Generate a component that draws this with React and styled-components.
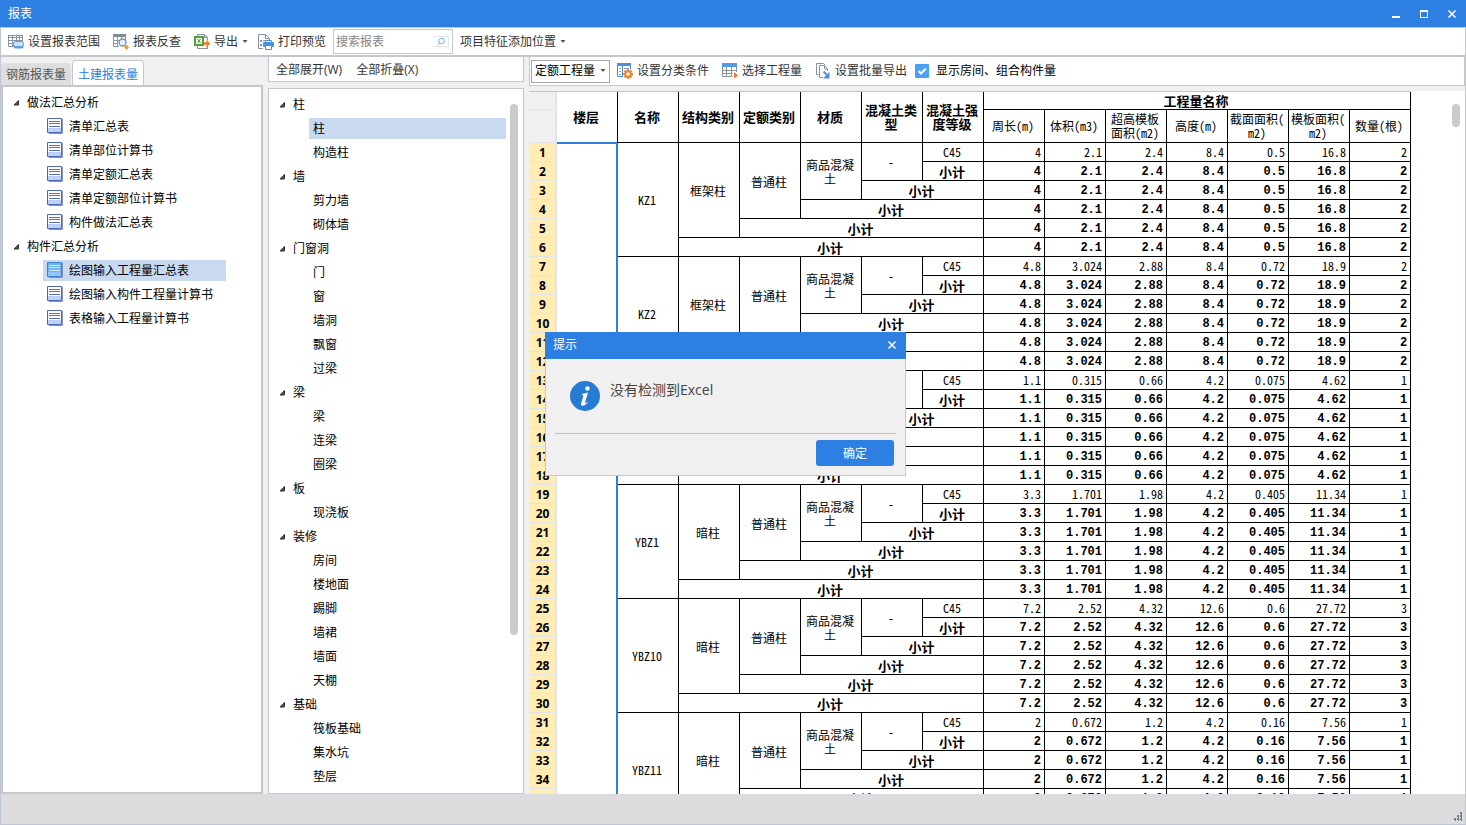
import React, { useState } from "react";
import styled, { createGlobalStyle } from "styled-components";

//-----------Styling--------------//

const GlobalStyle = createGlobalStyle`
  * {
    box-sizing: border-box;
  }

  body {
    margin: 0;
    font-family: "Open Sans", "Noto Sans CJK SC", sans-serif;
    font-size: 12px;
    line-height: 16px;
    color: #000;
  }

  button, input, select {
    font: inherit;
    color: inherit;
  }
`;

const Window = styled.div`
  display: flex;
  flex-direction: column;
  height: 100vh;
  background: #f0f0f0;
`;

const TitleBar = styled.header`
  display: flex;
  align-items: center;
  justify-content: space-between;
  flex: none;
  height: 27px;
  padding: 0 8px;
  background: #2d80e2;
  color: #fff;
`;

const Title = styled.h1`
  margin: 0;
  font-size: 12px;
  font-weight: 400;
`;

const WindowButtons = styled.div`
  display: flex;
  gap: 16px;
`;

const IconButton = styled.button`
  display: flex;
  padding: 0;
  border: 0;
  background: none;
`;

const Frame = styled.div`
  display: flex;
  flex-direction: column;
  flex: 1;
  min-height: 0;
  border: solid #bfc7d6;
  border-width: 0 1px 1px;
`;

const Toolbar = styled.div`
  display: flex;
  align-items: center;
  gap: 1px;
  flex: none;
  height: 30px;
  padding: 0 1px;
  background: #fff;
  border-top: 1px solid #c4c8cd;
  border-bottom: 2px solid #c4c8cd;
`;

const ToolButton = styled.button`
  display: flex;
  align-items: center;
  gap: 4px;
  height: 22px;
  padding: 0 ${(props) => (props.$menu ? "3px" : "6px")} 0 6px;
  border: 0;
  border-radius: 3px;
  background: #fff;
  color: #333;
  white-space: nowrap;
`;

const SearchBox = styled.label`
  display: flex;
  align-items: center;
  width: 120px;
  height: 25px;
  padding: 0 3px 0 2px;
  border: 1px solid #c4c8cd;

  input {
    flex: 1;
    min-width: 0;
    padding: 0;
    border: 0;
    outline: 0;
    background: none;
  }

  input::placeholder {
    color: #858585;
    opacity: 1;
  }
`;

const Main = styled.main`
  display: grid;
  grid-template-columns: 262px 256px minmax(0, 1fr);
  gap: 5px;
  flex: 1;
  min-height: 0;
`;

const Column = styled.section`
  display: flex;
  flex-direction: column;
  min-width: 0;
  min-height: 0;
`;

const Tabs = styled.div`
  display: flex;
  align-items: flex-end;
  gap: 1px;
  flex: none;
  height: 28px;
`;

const Tab = styled.button`
  height: ${(props) => (props.$active ? "26px" : "22px")};
  margin-bottom: ${(props) => (props.$active ? "-1px" : "0")};
  padding: 2px 5px 0;
  border: ${(props) => (props.$active ? "1px solid #c4c8cd" : "0")};
  border-bottom: 0;
  border-radius: 4px 4px 0 0;
  background: ${(props) => (props.$active ? "#fff" : "#dedede")};
  color: ${(props) => (props.$active ? "#2d80e2" : "#555")};
`;

const Panel = styled.div`
  display: flex;
  flex: 1;
  min-height: 0;
  overflow: hidden;
  padding-top: 3px;
  background: #fff;
  border: ${(props) => (props.$thick ? "2px" : "1px")} solid #c4c8cd;
`;

const PanelToolbar = styled.div`
  display: flex;
  align-items: center;
  gap: ${(props) => (props.$tall ? "1px" : "2px")};
  flex: none;
  height: ${(props) => (props.$tall ? "29px" : "25px")};
  margin-bottom: ${(props) => (props.$tall ? "5px" : "6px")};
  padding: ${(props) => (props.$tall ? "0 1px" : "2px 1px 0")};
  background: #fff;
  border: 1px solid #c4c8cd;
  border-top: 0;
`;

const Tree = styled.ul`
  flex: 1;
  margin: 0;
  padding: 0;
  list-style: none;

  ul {
    margin: 0;
    padding: 0;
    list-style: none;
  }
`;

const TreeGroup = styled.button`
  display: flex;
  align-items: center;
  gap: 7px;
  height: 24px;
  padding: 2px 9px 0;
  border: 0;
  background: none;
`;

const TreeItem = styled.li`
  display: flex;
  align-items: center;
  height: 24px;
  padding-left: 40px;
  padding-right: ${(props) => (props.$wide ? "4px" : "35px")};
`;

const TreeButton = styled.button`
  display: flex;
  align-items: center;
  gap: 6px;
  flex: 1;
  height: 21px;
  padding: 0 4px;
  border: 0;
  background: ${(props) => (props.$selected ? "#c9d9f0" : "none")};
  white-space: nowrap;

  span {
    padding-top: 2px;
  }
`;

const ScrollTrack = styled.div`
  display: flex;
  flex: none;
  width: 8px;
  margin: ${(props) => (props.$table ? "13px 5px 0 0" : "12px 5px 0 0")};
`;

const ScrollThumb = styled.div`
  width: 8px;
  height: ${(props) => props.$length};
  border-radius: 4px;
  background: #cbcbcb;
`;

const SelectBox = styled.label`
  display: flex;
  align-items: center;
  width: 79px;
  height: 23px;
  padding: 0 3px;
  border: 1px solid #a5a5a5;

  select {
    flex: 1;
    min-width: 0;
    padding: 0;
    border: 0;
    outline: 0;
    appearance: none;
    background: none;
  }
`;

const CheckLabel = styled.label`
  display: flex;
  align-items: center;
  gap: 7px;
  padding-left: 1px;
  white-space: nowrap;

  input {
    position: absolute;
    opacity: 0;
  }
`;

const Sheet = styled.div`
  display: flex;
  align-items: flex-start;
  justify-content: space-between;
  flex: 1;
  min-height: 0;
  overflow: hidden;
  background: #fff;
`;

const Table = styled.table`
  flex: none;
  table-layout: fixed;
  width: 882px;
  border-spacing: 0;
  border-top: 1px solid #c4c4c4;
  font-family: "Noto Sans Mono CJK SC", "Noto Sans CJK SC", monospace;
  font-size: 12px;
  line-height: 14px;
`;

const Cell = styled.td`
  height: 19px;
  padding: 0 2px 0 0;
  overflow: hidden;
  border: solid #000;
  border-width: 0 1px 1px 0;
  text-align: center;
  font-weight: ${(props) => (props.$bold ? "700" : "400")};
  font-size: ${(props) => (props.$bold ? "13px" : "12px")};
  line-break: anywhere;
`;

const TextCell = styled(Cell)`
  padding-top: 2px;
`;

const NumberCell = styled(Cell)`
  padding: ${(props) => (props.$bold ? "2px" : "0")} 3px 0 0;
  text-align: right;
  font-size: 12px;
  font-family: ${(props) =>
    props.$bold
      ? '"Liberation Mono", monospace'
      : '"Noto Sans Mono CJK SC", "Liberation Mono", monospace'};
`;

const HeadCell = styled(Cell)`
  height: ${(props) => (props.$top ? "18px" : "33px")};
  border-bottom-color: ${(props) => (props.$blue ? "#2d80e2" : "#000")};
`;

const FloorCell = styled.td`
  border-top: 1px solid #2d80e2;
  border-right: 2px solid #2d80e2;
`;

const RowHead = styled.th`
  height: ${(props) => props.$height || "19px"};
  padding: 1px 0 0 1px;
  border: solid #e3e4e8;
  border-width: 0 2px 1px 0;
  background: ${(props) => (props.$corner ? "#f0f0f0" : "#ffedb3")};
  font-family: "Open Sans", sans-serif;
  font-size: 12px;
  font-weight: 700;
`;

const StatusBar = styled.footer`
  display: flex;
  align-items: flex-end;
  justify-content: flex-end;
  flex: none;
  height: 30px;
  padding: 2px 2px;
  background: #dcdcde;
`;

const Dialog = styled.div`
  position: fixed;
  top: calc(50% - 81px);
  left: calc(50% - 188px);
  z-index: 10;
  width: 361px;
  background: #f0f0f0;
  border: 1px solid #bfc7d6;
  border-top: 0;
`;

const DialogHeader = styled.header`
  display: flex;
  align-items: center;
  justify-content: space-between;
  height: 27px;
  margin: 0 -1px;
  padding: 0 8px;
  background: #2d80e2;
  color: #fff;
`;

const DialogContent = styled.div`
  display: flex;
  gap: 10px;
  height: 75px;
  margin: 0 9px;
  padding: 22px 15px 0;
  border-bottom: 1px solid #c0c3c6;
  color: #444;
  font-size: 14px;

  p {
    margin: 0;
    line-height: 18px;
  }
`;

const DialogFooter = styled.footer`
  display: flex;
  justify-content: flex-end;
  padding: 6px 11px 9px;
`;

const ConfirmButton = styled.button`
  width: 78px;
  height: 26px;
  padding: 2px 0 0;
  border: 0;
  border-radius: 3px;
  background: #2d80e2;
  color: #fff;
`;

//-----------Icons--------------//

const Svg = ({ size = 16, children }) => (
  <svg width={size} height={size} viewBox={`0 0 ${size} ${size}`} fill="none" aria-hidden="true">
    {children}
  </svg>
);

const Caret = () => (
  <svg width="6" height="4" viewBox="0 0 6 4" aria-hidden="true">
    <path d="M.5 0h5L3 3z" fill="#555" />
  </svg>
);

const CloseIcon = () => (
  <Svg size={12}>
    <path d="M2.5 2.5l7 7M9.5 2.5l-7 7" stroke="#fff" strokeWidth="1.5" />
  </Svg>
);

const RangeIcon = () => (
  <Svg>
    <path d="M0 1h15v3H0z" fill="#8594a0" />
    <path d="M.5 3v9.5H6M.5 6.5h14M.5 9.5h5M4.5 2v10M8.5 2v5M11.5 2v5M14.5 2v6" stroke="#8594a0" />
    <path d="M1 2.500h3M5 2.500h3M9 2.500h2M12 2.500h2" stroke="#fff" />
    <rect x="5.500" y="8.500" width="10" height="6" rx="2" fill="#5b9ee2" />
    <rect x="5.500" y="7.500" width="10" height="5" rx="2" fill="#c8e2fb" stroke="#5b9ee2" />
  </Svg>
);

const CheckReportIcon = () => (
  <Svg>
    <path d="M0 0h13v3H0z" fill="#7e8c98" />
    <path d="M.5 2v10.500H6M.5 6.500H6M.5 9.500H5M4.500 3v9M8.500 3v2M12.500 2v4" stroke="#8d9aa5" />
    <circle cx="9.500" cy="8.500" r="3.500" fill="#e2f0fd" stroke="#6a90c4" strokeWidth="1.300" />
    <path d="M13.500 10.500l2.500 2.700-2.500 2.700-2.500-2.700z" fill="#f59a1c" />
  </Svg>
);

const ExportIcon = () => (
  <Svg>
    <path d="M3.500 2V.5h7l3 3V6M3.500 12v2.500h10V12" stroke="#8594a0" />
    <path d="M10.500 1v2.500h3" stroke="#8594a0" />
    <rect x="1" y="3" width="8" height="8" fill="#eaf5e5" stroke="#5b9b43" strokeWidth="2" />
    <path d="M3.500 5l3 4M6.500 5l-3 4" stroke="#5b9b43" />
    <path d="M10 8.200h2.500V5.500L16 9.500l-3.500 4V10.800H10z" fill="#f47a26" />
  </Svg>
);

const PrintIcon = () => (
  <Svg>
    <path d="M5 14.500H.5V.5h7l4 4V6M7.500 1v3.500H11" stroke="#8594a0" />
    <path d="M2 6h2v2H2zM5 6h2v1H5zM2 10h2v2H2z" fill="#8594a0" />
    <rect x="5" y="8" width="11" height="5" rx="1" fill="#4a90e0" />
    <path d="M7.500 6.500h6v2h-6zM7.500 11.500h6v4h-6z" fill="#fff" stroke="#4a90e0" />
  </Svg>
);

const SearchIcon = () => (
  <svg width="16" height="11" viewBox="0 0 16 11" fill="none" aria-hidden="true">
    <path d="M0 .5h15.500v10H0" stroke="#e4e4e4" />
    <circle cx="8.500" cy="5" r="2.800" stroke="#6db3ee" />
    <path d="M6.500 7L4.500 9" stroke="#6db3ee" />
  </svg>
);

const ClassifyIcon = () => (
  <Svg>
    <path d="M.5 13.500V.5h13V6M.5 13.500H6" stroke="#4a8fdb" />
    <path d="M0 0h14v3H0z" fill="#4a8fdb" />
    <path d="M5.500 3v10" stroke="#4a8fdb" />
    <path d="M2 5.500h2M2 8.500h2M2 11.500h2M7 5.500h5" stroke="#8594a0" />
    <path d="M11 6v10M6 11h10M7.500 7.500l7 7M14.500 7.500l-7 7" stroke="#f2802c" strokeWidth="1.800" />
    <circle cx="11" cy="11" r="2.800" fill="#fff" stroke="#f2802c" strokeWidth="2" />
  </Svg>
);

const QuantityIcon = () => (
  <Svg>
    <path d="M0 0h15v4H0z" fill="#5699e4" />
    <path d="M.5 4v9.500h10M.5 7.500h14M.5 10.500h10M4.500 4v9M9.500 4v9M14.500 4v5" stroke="#8594a0" />
    <path d="M12 9l4 3.500-4 3z" fill="#f2762c" />
  </Svg>
);

const BatchIcon = () => (
  <Svg>
    <path d="M3.500 11.500h-2V.5h7l1.500 1.500" stroke="#8594a0" />
    <path d="M8 14.500H4.500v-12h5l3 3V8M9.500 3v3h3" stroke="#8594a0" />
    <path d="M8.500 8.500l4 4" stroke="#4a90e0" strokeWidth="2" />
    <path d="M14.500 9v6.500H8z" fill="#4a90e0" />
  </Svg>
);

const DocIcon = ({ selected }) => (
  <Svg>
    <path d="M2 15.500h13.500V1" stroke="#8a93a8" />
    <path d="M.5.5h14v14H.5z" fill={selected ? "#6eb2f8" : "#fff"} stroke={selected ? "#3f7fd0" : "#4a67b8"} />
    <path d="M1 10h13v4H1z" fill={selected ? "#90c4fb" : "#bdd2fb"} />
    <path d="M2 3.500h11M2 5.500h11M2 8.500h11" stroke={selected ? "#d5e9fd" : "#5273c4"} />
  </Svg>
);

const TreeArrow = () => (
  <svg width="8" height="8" viewBox="0 0 8 8" aria-hidden="true">
    <path d="M6.500 1.500v4.500H2z" fill="#555" stroke="#333" />
  </svg>
);

const CheckIcon = () => (
  <Svg size={14}>
    <rect width="14" height="14" rx="1" fill="#4c9ff8" />
    <path d="M3.500 7l2.500 2.500 5-5" stroke="#fff" strokeWidth="2" />
  </Svg>
);

const InfoIcon = () => (
  <Svg size={30}>
    <circle cx="15" cy="15" r="15" fill="#267cd4" />
    <circle cx="17.500" cy="7.500" r="2.200" fill="#fff" />
    <path d="M12 13c2-.5 4-1.200 6-1.500l-3 10c-.3 1.200.6.8 2.200-.8l.6.6c-2 2.600-4 3.700-5.500 3.500-1.300-.2-1.500-1.300-1.100-2.800l2-6.500c.4-1.300 0-1.500-1.400-1.500z" fill="#fff" />
  </Svg>
);

const GripIcon = () => (
  <svg width="10" height="10" viewBox="0 0 10 10" aria-hidden="true">
    <path d="M7 0h2v2H7zM8 2h1v1H8zM4 3h2v2H4zM5 5h1v1H5zM7 3h2v2H7zM8 5h1v1H8zM1 6h2v2H1zM2 8h1v1H2zM4 6h2v2H4zM5 8h1v1H5zM7 6h2v2H7zM8 8h1v1H8z" fill="#727b88" />
  </svg>
);

//-----------Data--------------//

const reports = [
  { title: "做法汇总分析", items: ["清单汇总表", "清单部位计算书", "清单定额汇总表", "清单定额部位计算书", "构件做法汇总表"] },
  { title: "构件汇总分析", items: ["绘图输入工程量汇总表", "绘图输入构件工程量计算书", "表格输入工程量计算书"] },
];

const components = [
  { title: "柱", items: ["柱", "构造柱"] },
  { title: "墙", items: ["剪力墙", "砌体墙"] },
  { title: "门窗洞", items: ["门", "窗", "墙洞", "飘窗", "过梁"] },
  { title: "梁", items: ["梁", "连梁", "圈梁"] },
  { title: "板", items: ["现浇板"] },
  { title: "装修", items: ["房间", "楼地面", "踢脚", "墙裙", "墙面", "天棚"] },
  { title: "基础", items: ["筏板基础", "集水坑", "垫层"] },
];

const headings = ["名称", "结构类别", "定额类别", "材质", "混凝土类型", "混凝土强度等级"];

const quantities = ["周长(m)", "体积(m3)", "超高模板面积(m2)", "高度(m)", "截面面积(m2)", "模板面积(m2)", "数量(根)"];

const columns = [
  { name: "KZ1", type: "框架柱", values: ["4", "2.1", "2.4", "8.4", "0.5", "16.8", "2"] },
  { name: "KZ2", type: "框架柱", values: ["4.8", "3.024", "2.88", "8.4", "0.72", "18.9", "2"] },
  { name: "KZ3", type: "框架柱", values: ["1.1", "0.315", "0.66", "4.2", "0.075", "4.62", "1"] },
  { name: "YBZ1", type: "暗柱", values: ["3.3", "1.701", "1.98", "4.2", "0.405", "11.34", "1"] },
  { name: "YBZ10", type: "暗柱", values: ["7.2", "2.52", "4.32", "12.6", "0.6", "27.72", "3"] },
  { name: "YBZ11", type: "暗柱", values: ["2", "0.672", "1.2", "4.2", "0.16", "7.56", "1"] },
];

//----------------component's logic------------------///

const ReportTree = ({ groups, initial, icons }) => {
  const [selected, setSelected] = useState(initial);

  return (
    <Tree>
      {groups.map((group, g) => (
        <li key={group.title}>
          <TreeGroup type="button" aria-expanded="true">
            <TreeArrow />
            {group.title}
          </TreeGroup>
          <ul>
            {group.items.map((item, i) => {
              const id = `${g}-${i}`;
              return (
                <TreeItem key={id} $wide={!icons}>
                  <TreeButton type="button" $selected={selected === id} onClick={() => setSelected(id)}>
                    {icons && <DocIcon selected={selected === id} />}
                    <span>{item}</span>
                  </TreeButton>
                </TreeItem>
              );
            })}
          </ul>
        </li>
      ))}
    </Tree>
  );
};

const ColumnRows = ({ column, start }) =>
  [0, 1, 2, 3, 4, 5].map((step) => (
    <tr key={step}>
      <RowHead scope="row">{start + step + 1}</RowHead>
      {start + step === 0 && <FloorCell rowSpan={columns.length * 6} />}
      {step === 0 && (
        <>
          <Cell rowSpan={6}>{column.name}</Cell>
          <TextCell rowSpan={5}>{column.type}</TextCell>
          <TextCell rowSpan={4}>普通柱</TextCell>
          <TextCell rowSpan={3}>商品混凝土</TextCell>
          <Cell rowSpan={2}>-</Cell>
          <Cell>C45</Cell>
        </>
      )}
      {step > 0 && (
        <TextCell $bold colSpan={step}>
          小计
        </TextCell>
      )}
      {column.values.map((value, i) => (
        <NumberCell key={i} $bold={step > 0}>
          {value}
        </NumberCell>
      ))}
    </tr>
  ));

const QuantityTable = () => (
  <Table>
    <colgroup>
      <col style={{ width: 28 }} />
      <col span={14} style={{ width: 61 }} />
    </colgroup>
    <thead>
      <tr>
        <RowHead $corner $height="18px" />
        <HeadCell as="th" $bold $blue rowSpan={2}>
          楼层
        </HeadCell>
        {headings.map((heading) => (
          <HeadCell as="th" $bold key={heading} rowSpan={2}>
            {heading}
          </HeadCell>
        ))}
        <HeadCell as="th" $bold $top colSpan={7}>
          工程量名称
        </HeadCell>
      </tr>
      <tr>
        <RowHead $corner $height="33px" />
        {quantities.map((quantity) => (
          <HeadCell as="th" key={quantity}>
            {quantity}
          </HeadCell>
        ))}
      </tr>
    </thead>
    <tbody>
      {columns.map((column, i) => (
        <ColumnRows key={column.name} column={column} start={i * 6} />
      ))}
    </tbody>
  </Table>
);

const MessageDialog = (props) => (
  <Dialog role="dialog" aria-labelledby="dialog-title">
    <DialogHeader>
      <Title as="h2" id="dialog-title">
        {props.title}
      </Title>
      <IconButton type="button" aria-label="关闭" onClick={props.onConfirm}>
        <CloseIcon />
      </IconButton>
    </DialogHeader>
    <DialogContent>
      <InfoIcon />
      <p>{props.message}</p>
    </DialogContent>
    <DialogFooter>
      <ConfirmButton type="button" onClick={props.onConfirm}>
        确定
      </ConfirmButton>
    </DialogFooter>
  </Dialog>
);

const App = () => {
  const [showDialog, setShowDialog] = useState(true);
  const [showRooms, setShowRooms] = useState(true);

  return (
    <Window>
      <GlobalStyle />
      <TitleBar>
        <Title>报表</Title>
        <WindowButtons>
          <IconButton type="button" aria-label="最小化">
            <Svg size={12}>
              <path d="M2 9h8" stroke="#fff" strokeWidth="2" />
            </Svg>
          </IconButton>
          <IconButton type="button" aria-label="最大化">
            <Svg size={12}>
              <path d="M2.500 3v6.500h7V3" stroke="#fff" />
              <path d="M2 3h8" stroke="#fff" strokeWidth="2" />
            </Svg>
          </IconButton>
          <IconButton type="button" aria-label="关闭">
            <CloseIcon />
          </IconButton>
        </WindowButtons>
      </TitleBar>
      <Frame>
        <Toolbar>
          <ToolButton type="button">
            <RangeIcon />
            设置报表范围
          </ToolButton>
          <ToolButton type="button">
            <CheckReportIcon />
            报表反查
          </ToolButton>
          <ToolButton type="button" $menu>
            <ExportIcon />
            导出
            <Caret />
          </ToolButton>
          <ToolButton type="button">
            <PrintIcon />
            打印预览
          </ToolButton>
          <SearchBox>
            <input type="text" placeholder="搜索报表" aria-label="搜索报表" />
            <SearchIcon />
          </SearchBox>
          <ToolButton type="button" $menu>
            项目特征添加位置
            <Caret />
          </ToolButton>
        </Toolbar>
        <Main>
          <Column>
            <Tabs role="tablist">
              <Tab type="button" role="tab" aria-selected="false">
                钢筋报表量
              </Tab>
              <Tab type="button" role="tab" aria-selected="true" $active>
                土建报表量
              </Tab>
            </Tabs>
            <Panel $thick>
              <ReportTree groups={reports} initial="1-0" icons />
            </Panel>
          </Column>
          <Column>
            <PanelToolbar>
              <ToolButton type="button">全部展开(W)</ToolButton>
              <ToolButton type="button">全部折叠(X)</ToolButton>
            </PanelToolbar>
            <Panel>
              <ReportTree groups={components} initial="0-0" />
              <ScrollTrack>
                <ScrollThumb $length="77%" />
              </ScrollTrack>
            </Panel>
          </Column>
          <Column>
            <PanelToolbar $tall>
              <SelectBox>
                <select aria-label="工程量类型">
                  <option>定额工程量</option>
                </select>
                <Caret />
              </SelectBox>
              <ToolButton type="button">
                <ClassifyIcon />
                设置分类条件
              </ToolButton>
              <ToolButton type="button">
                <QuantityIcon />
                选择工程量
              </ToolButton>
              <ToolButton type="button">
                <BatchIcon />
                设置批量导出
              </ToolButton>
              <CheckLabel>
                <input type="checkbox" checked={showRooms} onChange={() => setShowRooms(!showRooms)} />
                <CheckIcon />
                显示房间、组合构件量
              </CheckLabel>
            </PanelToolbar>
            <Sheet>
              <QuantityTable />
              <ScrollTrack $table>
                <ScrollThumb $length="23px" />
              </ScrollTrack>
            </Sheet>
          </Column>
        </Main>
        <StatusBar>
          <GripIcon />
        </StatusBar>
      </Frame>
      {showDialog && <MessageDialog title="提示" message="没有检测到Excel" onConfirm={() => setShowDialog(false)} />}
    </Window>
  );
};

export default App;
